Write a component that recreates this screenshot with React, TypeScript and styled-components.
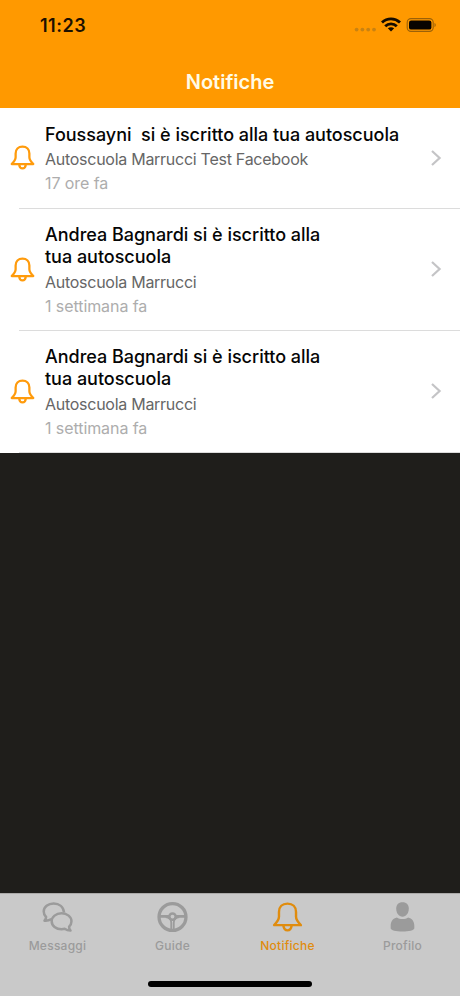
import React from 'react';
import styled, { createGlobalStyle } from 'styled-components';

const GlobalStyle = createGlobalStyle`
  * { box-sizing: border-box; }
  body { margin: 0; background: #1f1e1b; font-family: Inter, "Liberation Sans", sans-serif; }
`;

const Screen = styled.div`
  width: 460px;
  height: 996px;
  display: flex;
  flex-direction: column;
  background: #1f1e1b;
  overflow: hidden;
`;

const Header = styled.header`
  height: 108px;
  flex: none;
  background: #ff9900;
`;

const StatusBar = styled.div`
  height: 52px;
  padding: 0 24px 2px 40px;
  display: flex;
  align-items: center;
  justify-content: space-between;
`;

const Clock = styled.span`
  font-size: 18px;
  font-weight: 600;
  letter-spacing: 0.5px;
  color: #1c1000;
`;

const StatusIcons = styled.svg`
  display: block;
  width: 84px;
  height: 20px;
`;

const Title = styled.h1`
  margin: 0;
  height: 58px;
  line-height: 60px;
  text-align: center;
  font-size: 20px;
  font-weight: 600;
  color: #fffbe6;
`;

const List = styled.ul`
  margin: 0;
  padding: 0;
  list-style: none;
  background: #fff;
`;

const Row = styled.li<{ $height: number }>`
  height: ${(p) => p.$height}px;
  display: grid;
  grid-template-columns: 45px 1fr 30px;
  align-items: center;
  padding-bottom: 2px;
  background: linear-gradient(#dcdcdc, #dcdcdc) 19px 100% / 441px 1px no-repeat #fff;
`;

const RowBell = styled.svg`
  width: 25px;
  height: 25px;
  margin-left: 10px;
  display: block;
  color: #ff9b0c;
`;

const RowText = styled.div`
  align-self: start;
  padding-top: 15px;
`;

const Heading = styled.div<{ $single: boolean }>`
  padding-top: ${(p) => (p.$single ? 1 : 0)}px;
  font-size: 18px;
  line-height: 22px;
  font-weight: 500;
  letter-spacing: -0.02px;
  color: #050505;
  white-space: pre;
`;

const School = styled.div<{ $single: boolean }>`
  margin-top: ${(p) => (p.$single ? 2 : 3)}px;
  font-size: 16px;
  line-height: 22px;
  color: #666;
  letter-spacing: -0.27px;
`;

const Age = styled.div`
  margin-top: 2px;
  font-size: 16px;
  line-height: 22px;
  color: #adadad;
  letter-spacing: -0.08px;
`;

const Chevron = styled.svg`
  width: 12px;
  height: 18px;
  display: block;
`;

const TabBar = styled.nav`
  height: 103px;
  margin-top: auto;
  flex: none;
  display: flex;
  flex-direction: column;
  align-items: center;
  justify-content: space-between;
  background: #c9c9c9;
  border-top: 1px solid #aaa9a8;
  padding-bottom: 9px;
`;

const Tabs = styled.div`
  width: 100%;
  display: grid;
  grid-template-columns: repeat(4, 1fr);
`;

const Tab = styled.div<{ $active?: boolean }>`
  display: flex;
  flex-direction: column;
  align-items: center;
  padding-top: 7px;
  color: ${(p) => (p.$active ? '#e08c0e' : '#9b9b9b')};
`;

const TabIcon = styled.svg`
  width: 31px;
  height: 32px;
  display: block;
`;

const TabLabel = styled.span`
  margin-top: 5px;
  font-size: 12px;
  line-height: 16px;
  font-weight: 500;
  letter-spacing: 0.25px;
`;

const HomeIndicator = styled.div`
  width: 164px;
  height: 6px;
  border-radius: 3px;
  background: #000;
`;

const BellShape = ({ stroke }: { stroke: number }) => (
  <g fill="none" stroke="currentColor" strokeWidth={stroke} strokeLinejoin="round" strokeLinecap="round">
    <path d="M16 2.2C10.6 2.2 7.2 5.6 7.2 10.8V15.8C7.2 19 5.4 21.2 2.2 24.4H29.8C26.6 21.2 24.8 19 24.8 15.8V10.8C24.8 5.6 21.4 2.2 16 2.2Z" />
    <path d="M11.8 25C12.1 28 13.6 29.8 16 29.8S19.9 28 20.2 25" />
  </g>
);

const MessagesIcon = () => (
  <TabIcon viewBox="0 0 32 32" fill="none" stroke="currentColor" strokeWidth="2.6" strokeLinejoin="round">
    <path d="M10 18.2C8 19.2 5.6 20.2 2.6 19.8C3.7 18.6 4.3 17.4 4.2 16C2.5 14.3 1.8 12.4 1.8 10.2C1.8 5.5 6.3 2 12 2C17.8 2 22.2 5.4 22.8 11.6" />
    <path d="M20.2 12.2C26 12.2 30.4 15.8 30.4 20.4C30.4 22.6 29.5 24.5 28 25.9C27.8 27.3 28.2 28.6 29.4 30C27 30 25 29.3 23.4 28.2C22.4 28.5 21.3 28.6 20.2 28.6C14.4 28.6 10 25 10 20.4S14.4 12.2 20.2 12.2Z" />
  </TabIcon>
);

const WheelIcon = () => (
  <TabIcon viewBox="0 0 32 32" fill="none" stroke="currentColor">
    <circle cx="16" cy="16" r="13.9" strokeWidth="3.4" />
    <circle cx="16" cy="15.6" r="3.3" strokeWidth="2.6" />
    <path d="M3 15.4H12.6M29 15.4H19.4" strokeWidth="2.8" />
    <path d="M9 16.2C12.4 16.6 14.7 18.4 14.7 22V29M23 16.2C19.6 16.6 17.3 18.4 17.3 22V29" strokeWidth="1.9" />
  </TabIcon>
);

const ProfileIcon = () => (
  <TabIcon viewBox="0 0 32 32" fill="currentColor">
    <path d="M16 .8C20.3 .8 22.5 3.3 22.5 7.5C22.5 12 19.8 15.7 16 15.7S9.5 12 9.5 7.5C9.5 3.3 11.7 .8 16 .8Z" />
    <path d="M10.2 16.4C11.8 17.4 13.7 18 16 18S20.2 17.4 21.8 16.4C25.8 17.2 28.2 20.3 28.2 25V27.6C28.2 29.7 22.5 31 16 31S3.8 29.7 3.8 27.6V25C3.8 20.3 6.2 17.2 10.2 16.4Z" />
  </TabIcon>
);

const notifications = [
  { title: 'Foussayni  si è iscritto alla tua autoscuola', school: 'Autoscuola Marrucci Test Facebook', age: '17 ore fa', height: 101 },
  { title: 'Andrea Bagnardi si è iscritto alla\ntua autoscuola', school: 'Autoscuola Marrucci', age: '1 settimana fa', height: 122 },
  { title: 'Andrea Bagnardi si è iscritto alla\ntua autoscuola', school: 'Autoscuola Marrucci', age: '1 settimana fa', height: 122 },
];

export default function App() {
  return (
    <>
      <GlobalStyle />
      <Screen>
        <Header>
          <StatusBar>
            <Clock>11:23</Clock>
            <StatusIcons viewBox="0 0 84 20">
              <g fill="#c98211">
                <circle cx="4.6" cy="14.6" r="1.9" />
                <circle cx="10.4" cy="14.6" r="1.9" />
                <circle cx="16.2" cy="14.6" r="1.9" />
                <circle cx="22" cy="14.6" r="1.9" />
              </g>
              <g fill="none" stroke="#150c00" strokeWidth="2.9">
                <path d="M30 7.5C35.2 2.7 42.8 2.7 48 7.5" />
                <path d="M33.2 11.2C36.5 8.1 41.5 8.1 44.8 11.2" />
              </g>
              <path d="M35.8 13.3C37.7 11.9 40.3 11.9 42.2 13.3L39 16.5Z" fill="#150c00" />
              <rect x="55.2" y="3.6" width="26" height="12.8" rx="3.8" fill="none" stroke="#9b6108" strokeWidth="1.1" />
              <rect x="57" y="5.4" width="22.4" height="9.2" rx="2.2" fill="#080400" />
              <path d="M82.5 8C84.1 8.6 84.1 11.4 82.5 12Z" fill="#9b6108" />
            </StatusIcons>
          </StatusBar>
          <Title>Notifiche</Title>
        </Header>
        <List>
          {notifications.map((n, i) => {
            const single = !n.title.includes('\n');
            return (
              <Row key={i} $height={n.height}>
                <RowBell viewBox="0 0 32 32"><BellShape stroke={2.9} /></RowBell>
                <RowText>
                  <Heading $single={single}>{n.title}</Heading>
                  <School $single={single}>{n.school}</School>
                  <Age>{n.age}</Age>
                </RowText>
                <Chevron viewBox="0 0 12 18">
                  <path d="M2 2L9.6 9L2 16" fill="none" stroke="#c4c4c6" strokeWidth="2.2" />
                </Chevron>
              </Row>
            );
          })}
        </List>
        <TabBar>
          <Tabs>
            <Tab><MessagesIcon /><TabLabel>Messaggi</TabLabel></Tab>
            <Tab><WheelIcon /><TabLabel>Guide</TabLabel></Tab>
            <Tab $active>
              <TabIcon viewBox="0 0 32 32"><BellShape stroke={2.5} /></TabIcon>
              <TabLabel>Notifiche</TabLabel>
            </Tab>
            <Tab><ProfileIcon /><TabLabel>Profilo</TabLabel></Tab>
          </Tabs>
          <HomeIndicator />
        </TabBar>
      </Screen>
    </>
  );
}
